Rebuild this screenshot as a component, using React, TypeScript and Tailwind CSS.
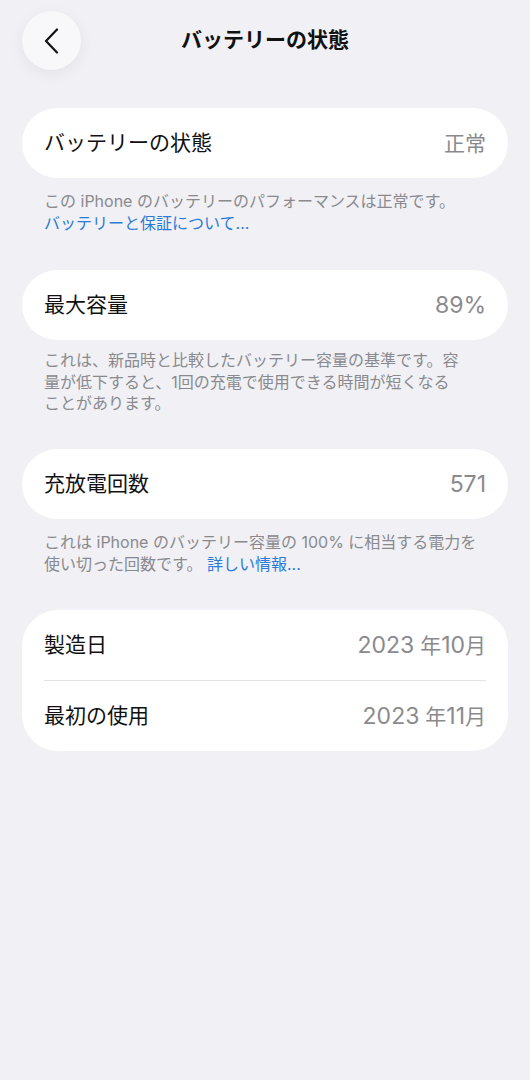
const font = "font-['Inter','Noto_Sans_CJK_JP','Noto_Sans',sans-serif]"

function Row({ label, children }: { label: string; children: React.ReactNode }) {
  return (
    <div className="flex h-[70px] items-center justify-between">
      <span className="text-[21px] text-[#111]">{label}</span>
      <span className="text-[23px] text-[#8a8a8e]">{children}</span>
    </div>
  )
}

function Card({ label, children }: { label: string; children: React.ReactNode }) {
  return (
    <div className="mx-[22px] rounded-full bg-white px-[22px]">
      <Row label={label}>{children}</Row>
    </div>
  )
}

function Footer({ className, children }: { className: string; children: React.ReactNode }) {
  return (
    <p className={`whitespace-nowrap pl-[44px] text-[16px] text-[#8a8a8e] ${className}`}>
      {children}
    </p>
  )
}

const Jp = ({ children }: { children: React.ReactNode }) => <span className="text-[21px]">{children}</span>

export default function App() {
  return (
    <div className={`${font} min-h-[1080px] w-full bg-[#f0f0f5]`}>
      {/* Header */}
      <header className="relative flex h-[108px] items-start justify-center pt-[11px]">
        <button
          type="button"
          className="absolute left-[22px] top-[11px] flex size-[59px] items-center justify-center rounded-full bg-[#f8f8fb] shadow-[0_4px_16px_rgba(0,0,0,0.06)]"
        >
          <svg width="16" height="26" viewBox="0 0 16 26" fill="none">
            <path d="M13 1.5 2 13l11 11.5" stroke="#111" strokeWidth="2.2" strokeLinecap="round" strokeLinejoin="round" />
          </svg>
        </button>
        <h1 className="mt-[14px] text-[21px] font-bold leading-[30px] text-[#111]">バッテリーの状態</h1>
      </header>

      <Card label="バッテリーの状態"><Jp>正常</Jp></Card>
      <Footer className="mt-[12px] mb-[36px] leading-[22px]">
        この iPhone のバッテリーのパフォーマンスは正常です。
        <br />
        <span className="text-[#2b7bd8]">バッテリーと保証について...</span>
      </Footer>

      <Card label="最大容量">89%</Card>
      <Footer className="mt-[10px] mb-[34.5px] leading-[21.5px]">
        これは、新品時と比較したバッテリー容量の基準です。容
        <br />
        量が低下すると、1回の充電で使用できる時間が短くなる
        <br />
        ことがあります。
      </Footer>

      <Card label="充放電回数">571</Card>
      <Footer className="mt-[12px] mb-[35px] leading-[22px]">
        これは iPhone のバッテリー容量の 100% に相当する電力を
        <br />
        使い切った回数です。 <span className="text-[#2b7bd8]">詳しい情報...</span>
      </Footer>

      {/* Dates */}
      <div className="mx-[22px] rounded-[36px] bg-white px-[22px]">
        <div className="border-b border-[#e2e2e6]">
          <Row label="製造日">
            2023<Jp> 年</Jp>10<Jp>月</Jp>
          </Row>
        </div>
        <Row label="最初の使用">
          2023<Jp> 年</Jp>11<Jp>月</Jp>
        </Row>
      </div>
    </div>
  )
}
